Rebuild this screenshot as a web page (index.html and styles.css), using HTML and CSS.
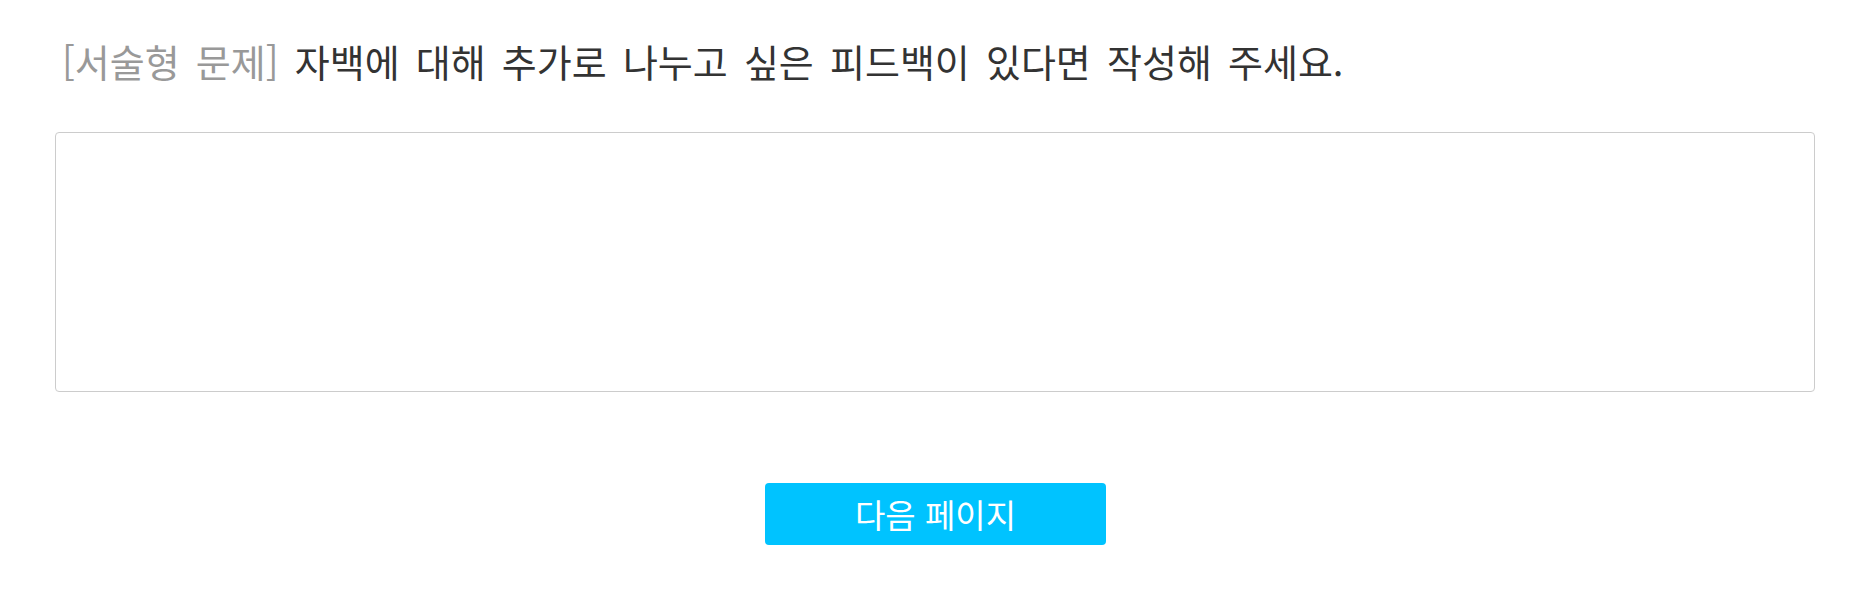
FILE: index.html
```html
<!DOCTYPE html>
<html lang="ko">
<head>
<meta charset="utf-8">
<link rel="stylesheet" href="styles.css">
</head>
<body>
<div class="page">
  <h2 class="question"><span class="tag">[서술형 문제]</span> 자백에 대해 추가로 나누고 싶은 피드백이 있다면 작성해 주세요.</h2>
  <textarea class="answer"></textarea>
  <div class="actions">
    <button class="next">다음 페이지</button>
  </div>
</div>
</body>
</html>
```
FILE: styles.css
```css
html, body {
  margin: 0;
  padding: 0;
  background: #fff;
}
body {
  font-family: "Noto Sans CJK KR", "Noto Sans", sans-serif;
  color: #333;
}
.page {
  padding: 39px 58px 0 55px;
}
.question {
  margin: 0 0 0 7px;
  font-size: 38px;
  font-weight: 400;
  line-height: 44px;
  word-spacing: 5.5px;
  color: #333;
}
.tag {
  color: #999;
}
.answer {
  display: block;
  box-sizing: border-box;
  width: 1760px;
  height: 260px;
  margin-top: 49px;
  border: 1px solid #ccc;
  border-radius: 4px;
  resize: none;
  outline: none;
  font-family: inherit;
}
.actions {
  display: flex;
  justify-content: center;
  margin-top: 91px;
  width: 1760px;
}
.next {
  width: 341px;
  height: 62px;
  margin-left: 1px;
  border: none;
  border-radius: 4px;
  background: #00c3ff;
  color: #fff;
  font-family: inherit;
  font-size: 33px;
  padding: 0;
}
```
